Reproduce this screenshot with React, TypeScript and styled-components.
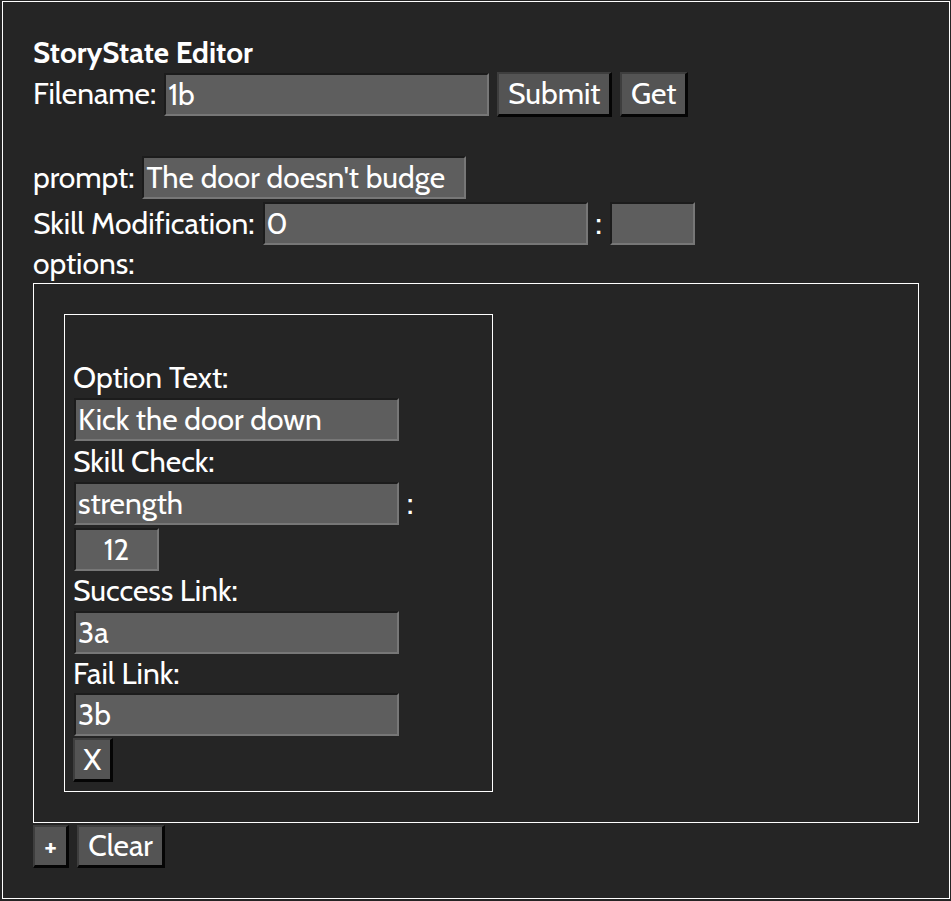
import React from "react";
import styled, { createGlobalStyle } from "styled-components";

const GlobalStyle = createGlobalStyle`
  html, body {
    margin: 0;
    padding: 0;
    background: #252525;
  }
  * {
    box-sizing: border-box;
  }
`;

const FONT = `Cabin, Lato, "Open Sans", sans-serif`;

const Page = styled.div`
  margin: 1px 1px 1px 2px;
  border: 1px solid #ffffff;
  padding: 30px;
  color: #ffffff;
  font-family: ${FONT};
  font-size: 30px;
  background: #252525;
`;

const Title = styled.div`
  font-weight: 700;
  font-size: 29.5px;
  height: 39px;
  line-height: 41px;
  white-space: nowrap;
`;

const Row = styled.div<{ $mt?: number; $h?: number }>`
  display: flex;
  align-items: center;
  gap: 8px;
  margin-top: ${(p) => p.$mt ?? 0}px;
  height: ${(p) => p.$h ?? 43}px;
`;

const Label = styled.span`
  white-space: nowrap;
  line-height: 1;
`;

const LineLabel = styled.div<{ $h?: number }>`
  height: ${(p) => p.$h ?? 40}px;
  line-height: ${(p) => p.$h ?? 40}px;
  white-space: nowrap;
`;

const Input = styled.input<{ $w?: number; $center?: boolean }>`
  width: ${(p) => p.$w ?? 325}px;
  height: 43px;
  flex: none;
  background: #5e5e5e;
  color: #ffffff;
  font-family: ${FONT};
  font-size: 30px;
  padding: 0 2px;
  margin: 0;
  text-align: ${(p) => (p.$center ? "center" : "left")};
  border-style: solid;
  border-width: 2px;
  border-color: #1c1c1c #777777 #777777 #1c1c1c;
  outline: none;
`;

const Button = styled.button<{ $w: number; $h?: number; $small?: boolean }>`
  width: ${(p) => p.$w}px;
  height: ${(p) => p.$h ?? 45}px;
  flex: none;
  padding: 0;
  margin: 0;
  background: #545454;
  color: #ffffff;
  font-family: ${FONT};
  font-size: ${(p) => (p.$small ? 28 : 30)}px;
  font-weight: ${(p) => (p.$small ? 700 : 400)};
  line-height: 1;
  border-style: solid;
  border-width: 2px 3px 3px 2px;
  border-color: #3e3e3e #050505 #050505 #3e3e3e;
  cursor: pointer;
`;

const Colon = styled.span`
  line-height: 1;
`;

const OptionsBox = styled.div`
  border: 1px solid #ffffff;
  padding: 30px;
`;

const OptionCard = styled.div`
  width: 429px;
  border: 1px solid #ffffff;
  padding: 43px 8px 9px 8px;
`;

const CardRow = styled.div<{ $mt?: number }>`
  display: flex;
  align-items: center;
  gap: 8px;
  margin-top: ${(p) => p.$mt ?? 0}px;
  padding-left: 1px;
`;

const RemoveButton = styled(Button)`
  margin-left: -1px;
`;

const Footer = styled.div`
  display: flex;
  gap: 8px;
  margin-top: 2px;
`;

export default function App() {
  return (
    <>
      <GlobalStyle />
      <Page>
        <Title>StoryState Editor</Title>
        <Row $h={46}>
          <Label>Filename:</Label>
          <Input defaultValue="1b" />
          <Button $w={115}>Submit</Button>
          <Button $w={68}>Get</Button>
        </Row>
        <Row $mt={39}>
          <Label>prompt:</Label>
          <Input $w={324} defaultValue="The door doesn't budge" />
        </Row>
        <Row $mt={3}>
          <Label>Skill Modification:</Label>
          <Input defaultValue="0" />
          <Colon>:</Colon>
          <Input $w={85} defaultValue="" />
        </Row>
        <LineLabel $h={38}>options:</LineLabel>
        <OptionsBox>
          <OptionCard>
            <LineLabel>Option Text:</LineLabel>
            <CardRow>
              <Input defaultValue="Kick the door down" />
            </CardRow>
            <LineLabel $h={41}>Skill Check:</LineLabel>
            <CardRow>
              <Input defaultValue="strength" />
              <Colon>:</Colon>
            </CardRow>
            <CardRow $mt={3}>
              <Input $w={85} $center defaultValue="12" />
            </CardRow>
            <LineLabel>Success Link:</LineLabel>
            <CardRow>
              <Input defaultValue="3a" />
            </CardRow>
            <LineLabel $h={39}>Fail Link:</LineLabel>
            <CardRow>
              <Input defaultValue="3b" />
            </CardRow>
            <CardRow $mt={2}>
              <RemoveButton $w={40} $h={44}>
                X
              </RemoveButton>
            </CardRow>
          </OptionCard>
        </OptionsBox>
        <Footer>
          <Button $w={36} $h={43} $small>
            +
          </Button>
          <Button $w={88} $h={43}>
            Clear
          </Button>
        </Footer>
      </Page>
    </>
  );
}
